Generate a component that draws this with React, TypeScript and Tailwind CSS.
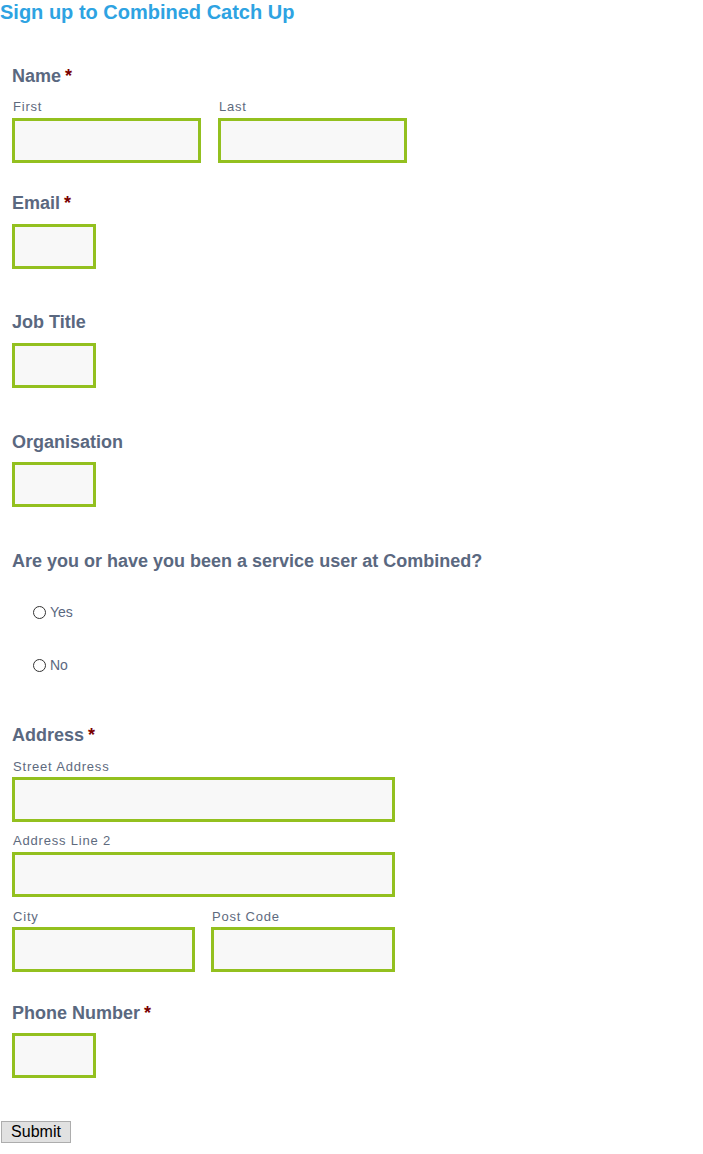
const labelCls = "block text-[18px] leading-5 font-bold text-[#5a6880]";
const subCls = "block pl-[1px] text-[13px] leading-4 tracking-[0.8px] text-[#5e6a7e]";
const inputCls = "block h-[45px] border-[3px] border-[#93c01f] bg-[#f8f8f8] outline-none";

function Req() {
  return <span className="ml-[4px] text-[#7a0000]">*</span>;
}

function Radio({ label }: { label: string }) {
  return (
    <label className="flex items-center pl-[21px]">
      <span className="inline-block h-[13px] w-[13px] rounded-full border border-[#333] bg-white" />
      <span className="ml-[4px] text-[14px] leading-4 text-[#5a6880]">{label}</span>
    </label>
  );
}

export default function App() {
  return (
    <div className="min-h-[1154px] bg-white" style={{ fontFamily: '"Liberation Sans", Arial, sans-serif' }}>
      <h1 className="text-[20px] leading-6 font-bold text-[#2ea3e2]">Sign up to Combined Catch Up</h1>

      <form className="pl-3">
        {/* name */}
        <div className="mt-[42px]">
          <span className={labelCls}>
            Name
            <Req />
          </span>
          <div className="mt-[13px] flex gap-[17px]">
            <div>
              <span className={subCls}>First</span>
              <input className={inputCls + " mt-[3px] w-[189px]"} />
            </div>
            <div>
              <span className={subCls}>Last</span>
              <input className={inputCls + " mt-[3px] w-[189px]"} />
            </div>
          </div>
        </div>

        <div className="mt-[30px]">
          <span className={labelCls}>
            Email
            <Req />
          </span>
          <input className={inputCls + " mt-[11px] w-[84px]"} />
        </div>

        <div className="mt-[43px]">
          <span className={labelCls}>Job Title</span>
          <input className={inputCls + " mt-[11px] w-[84px]"} />
        </div>

        <div className="mt-[44px]">
          <span className={labelCls}>Organisation</span>
          <input className={inputCls + " mt-[10px] w-[84px]"} />
        </div>

        <div className="mt-[44px]">
          <span className={labelCls}>Are you or have you been a service user at Combined?</span>
          <div className="mt-[33px] flex flex-col gap-[37px]">
            <Radio label="Yes" />
            <Radio label="No" />
          </div>
        </div>

        <div className="mt-[52px]">
          <span className={labelCls}>
            Address
            <Req />
          </span>
          <span className={subCls + " mt-[14px]"}>Street Address</span>
          <input className={inputCls + " mt-[2px] w-[383px]"} />
          <span className={subCls + " mt-[11px]"}>Address Line 2</span>
          <input className={inputCls + " mt-[3px] w-[383px]"} />
          <div className="mt-[12px] flex gap-[16px]">
            <div>
              <span className={subCls}>City</span>
              <input className={inputCls + " mt-[2px] w-[183px]"} />
            </div>
            <div>
              <span className={subCls}>Post Code</span>
              <input className={inputCls + " mt-[2px] w-[184px]"} />
            </div>
          </div>
        </div>

        <div className="mt-[31px]">
          <span className={labelCls}>
            Phone Number
            <Req />
          </span>
          <input className={inputCls + " mt-[10px] w-[84px]"} />
        </div>
      </form>

      <button className="ml-[1px] mt-[43px] h-[22px] w-[70px] border border-[#adadad] bg-[#e1e1e1] text-[16px] leading-5 text-black">
        Submit
      </button>
    </div>
  );
}
